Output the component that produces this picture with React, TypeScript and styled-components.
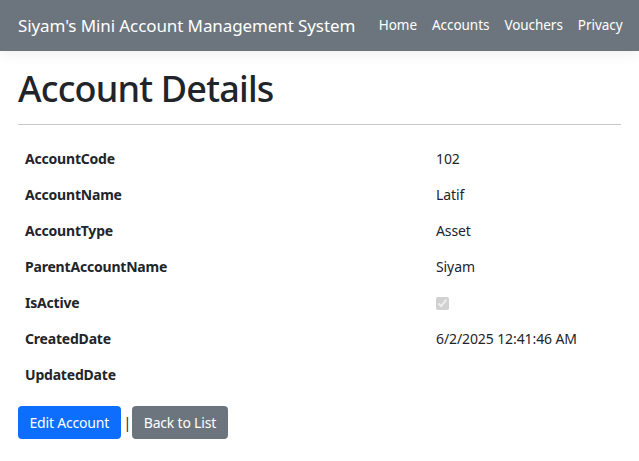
import React from "react";
import styled, { createGlobalStyle } from "styled-components";

const Global = createGlobalStyle`
  html, body { margin: 0; padding: 0; background: #fff; }
  body {
    font-family: "Noto Sans", "Open Sans", sans-serif;
    font-size: 14px;
    line-height: 1.5;
    color: #212529;
  }
  * { box-sizing: border-box; }
`;

const Navbar = styled.nav`
  height: 51px;
  background: #6c757d;
  box-shadow: 0 4px 12px rgba(0, 0, 0, 0.06);
  display: flex;
  align-items: center;
  padding: 0 9px 0 18px;
`;

const Brand = styled.a`
  color: #fff;
  font-size: 17px;
  letter-spacing: -0.1px;
  text-decoration: none;
  white-space: nowrap;
`;

const NavList = styled.ul`
  list-style: none;
  margin: 0 0 0 auto;
  padding: 0;
  display: flex;
`;

const NavLink = styled.a`
  display: block;
  color: #fff;
  font-size: 13.5px;
  letter-spacing: -0.05px;
  padding: 8px 7.5px;
  text-decoration: none;
  white-space: nowrap;
`;

const Main = styled.main`
  padding: 0 18px;
`;

const Title = styled.h1`
  font-size: 36px;
  letter-spacing: -0.8px;
  font-weight: 500;
  line-height: 1.2;
  margin: 16px 0 0;
`;

const Rule = styled.hr`
  border: 0;
  border-top: 1px solid #c8c8c8;
  margin: 14px 0 15px;
`;

const Table = styled.table`
  width: 100%;
  border-collapse: collapse;
`;

const Row = styled.tr`
  height: 36px;
`;

const Label = styled.th`
  text-align: left;
  font-weight: 700;
  letter-spacing: -0.2px;
  padding: 0 7px;
  width: 411px;
`;

const Value = styled.td`
  padding: 0 7px;
  letter-spacing: -0.1px;
`;

const Check = styled.input`
  margin: 0;
  width: 13px;
  height: 13px;
  vertical-align: middle;
`;

const Actions = styled.div`
  display: flex;
  align-items: center;
  margin-top: 14px;
`;

const Button = styled.a<{ $variant: "primary" | "secondary" }>`
  display: block;
  background: ${(p) => (p.$variant === "primary" ? "#0d6efd" : "#6c757d")};
  color: #fff;
  font-size: 14px;
  letter-spacing: -0.2px;
  line-height: 21px;
  padding: 6px 11.5px;
  border-radius: 4px;
  text-decoration: none;
`;

const Sep = styled.span`
  margin: 0 1px 0 3px;
  color: #212529;
`;

const rows: [string, React.ReactNode][] = [
  ["AccountCode", "102"],
  ["AccountName", "Latif"],
  ["AccountType", "Asset"],
  ["ParentAccountName", "Siyam"],
  ["IsActive", <Check type="checkbox" checked disabled readOnly />],
  ["CreatedDate", "6/2/2025 12:41:46 AM"],
  ["UpdatedDate", ""],
];

export default function App() {
  return (
    <>
      <Global />
      <Navbar>
        <Brand href="#">Siyam's Mini Account Management System</Brand>
        <NavList>
          {["Home", "Accounts", "Vouchers", "Privacy"].map((l) => (
            <li key={l}>
              <NavLink href="#">{l}</NavLink>
            </li>
          ))}
        </NavList>
      </Navbar>
      <Main>
        <Title>Account Details</Title>
        <Rule />
        <Table>
          <tbody>
            {rows.map(([k, v]) => (
              <Row key={k}>
                <Label>{k}</Label>
                <Value>{v}</Value>
              </Row>
            ))}
          </tbody>
        </Table>
        <Actions>
          <Button $variant="primary" href="#">Edit Account</Button>
          <Sep>|</Sep>
          <Button $variant="secondary" href="#">Back to List</Button>
        </Actions>
      </Main>
    </>
  );
}
